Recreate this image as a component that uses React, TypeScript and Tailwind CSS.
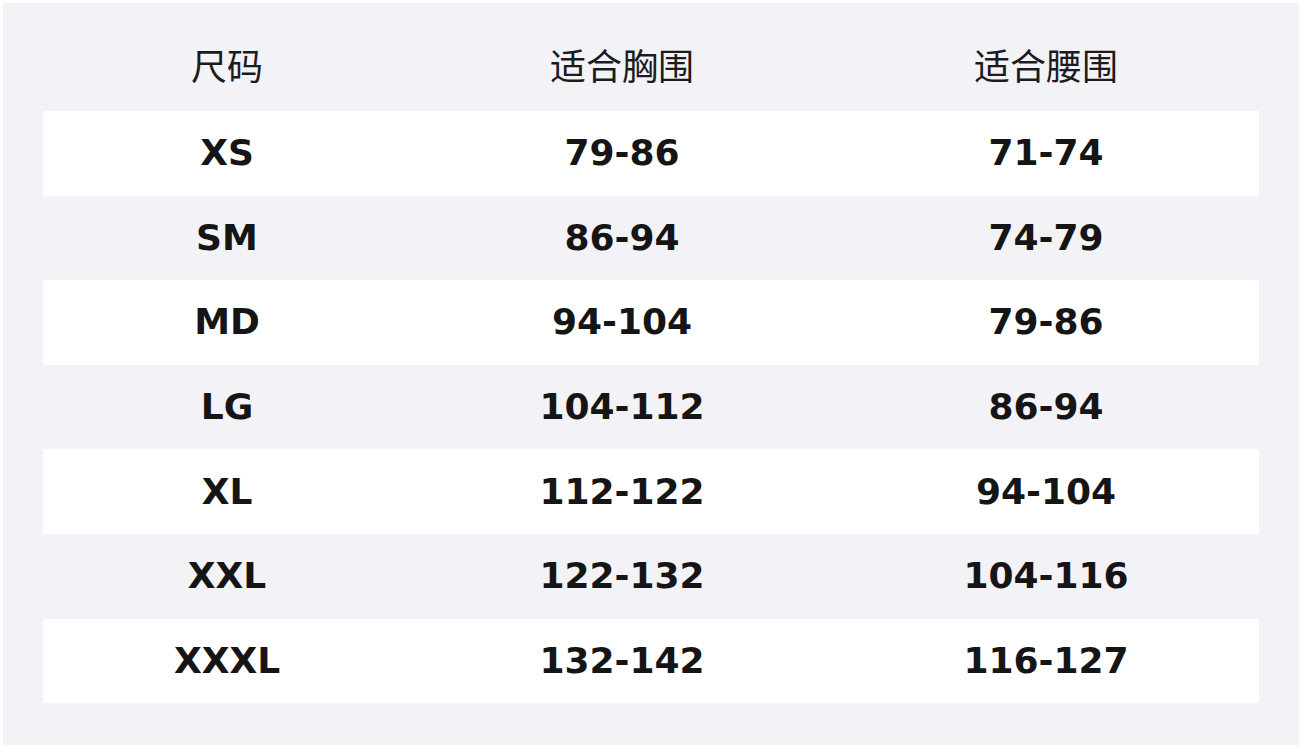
const rows = [
  ["XS", "79-86", "71-74"],
  ["SM", "86-94", "74-79"],
  ["MD", "94-104", "79-86"],
  ["LG", "104-112", "86-94"],
  ["XL", "112-122", "94-104"],
  ["XXL", "122-132", "104-116"],
  ["XXXL", "132-142", "116-127"],
];

const cols = "grid grid-cols-[368px_422px_426px]";

export default function App() {
  return (
    <div className="h-[748px] w-[1302px] bg-white p-[3px]">
      <div className="h-full w-full bg-[#f2f2f7] px-[40px] pt-[24px]">
        <div
          className={`${cols} h-[84px] items-center pb-[10px] text-[36px] text-[#1c1c1c] [font-family:'Noto_Sans_CJK_SC',sans-serif]`}
        >
          <div className="text-center">尺码</div>
          <div className="text-center">适合胸围</div>
          <div className="text-center">适合腰围</div>
        </div>
        {rows.map((r, i) => (
          <div
            key={r[0]}
            className={`${cols} h-[84.6px] items-center text-[36px] font-bold text-[#151515] [font-family:'DejaVu_Sans',sans-serif] ${
              i % 2 === 0 ? "bg-white" : "bg-[#f2f2f7]"
            }`}
          >
            {r.map((c, j) => (
              <div key={j} className="text-center">
                {c}
              </div>
            ))}
          </div>
        ))}
      </div>
    </div>
  );
}
